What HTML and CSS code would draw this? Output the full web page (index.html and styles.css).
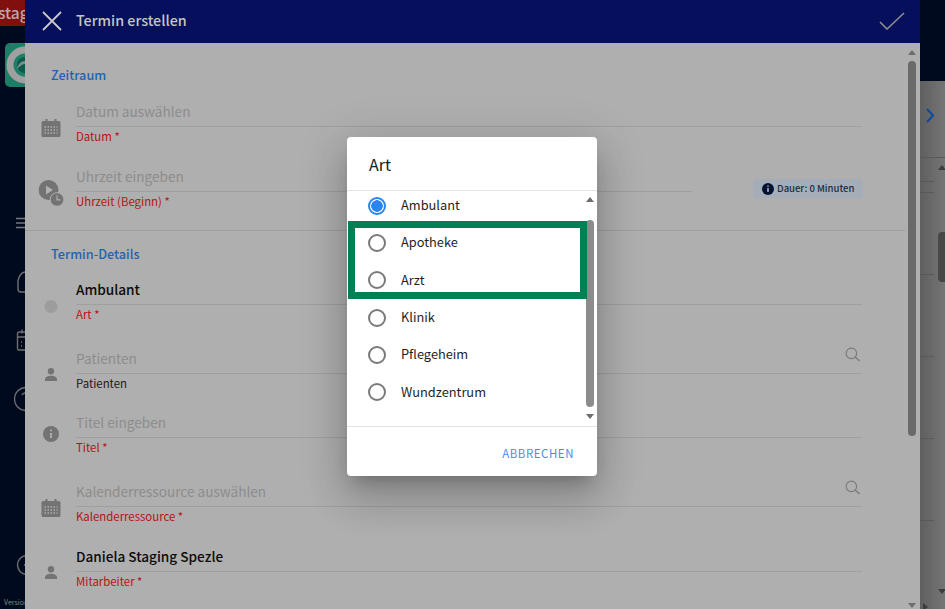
FILE: index.html
```html
<!DOCTYPE html>
<html lang="de">
<head>
    <meta charset="UTF-8">
    <meta name="viewport" content="width=device-width, initial-scale=1.0">
    <title>Termin erstellen</title>
    <link rel="stylesheet" href="styles.css">
</head>
<body>
    <div class="page">
        <aside class="sidebar">
            <div class="stage-tag">stag</div>
            <div class="logo">
                <svg width="20" height="44" viewBox="0 0 20 44"><circle cx="20" cy="22" r="15" fill="none" stroke="#a0a0a0" stroke-width="7"/><circle cx="20" cy="22" r="8" fill="#0d5a4c"/><path d="M12 26c1-5 4-8 8-8v3c-3 0-5 2-8 5z" fill="#7d8f89"/></svg>
            </div>
            <svg class="side-icon menu-icon" width="12" height="12" viewBox="0 0 12 12"><path d="M1 1.500h11M1 6h11M1 10.500h11" stroke="#777" stroke-width="1.400"/></svg>
            <svg class="side-icon bell-icon" width="10" height="24" viewBox="0 0 10 24"><path d="M10 2C5 2 3 6 2 11v8c0 2 1 3 3 3h5" fill="none" stroke="#707070" stroke-width="1.400"/></svg>
            <svg class="side-icon cal-icon" width="10" height="24" viewBox="0 0 10 24"><path d="M10 4H3a1.500 1.500 0 0 0-1.500 1.500v15A1.500 1.500 0 0 0 3 22h7M1.500 9H10M6 1.500v4M5 14h1M5 18h1" fill="none" stroke="#707070" stroke-width="1.400"/></svg>
            <svg class="side-icon help-icon" width="12" height="26" viewBox="0 0 12 26"><path d="M12 1.500a11.500 11.500 0 0 0 0 23" fill="none" stroke="#707070" stroke-width="1.400"/><path d="M8 9c1-2 3-2 4-2" fill="none" stroke="#707070" stroke-width="1.400"/></svg>
            <svg class="side-icon back-icon" width="12" height="26" viewBox="0 0 12 26"><path d="M12 3.500a9.500 9.500 0 0 0 0 19M12 13H9" fill="none" stroke="#707070" stroke-width="1.400"/></svg>
            <div class="version">Version</div>
        </aside>

        <main class="panel">
            <header class="panel-header">
                <svg class="close-icon" width="20" height="20" viewBox="0 0 20 20"><path d="M1 1l18 18M19 1L1 19" stroke="#c9c9c9" stroke-width="1.800"/></svg>
                <h1>Termin erstellen</h1>
                <svg class="check-icon" width="26" height="18" viewBox="0 0 26 18"><path d="M1 10l7 7L25 1" fill="none" stroke="#8e8e8e" stroke-width="1.600"/></svg>
            </header>

            <div class="panel-body">
                <div class="form">
                    <section class="form-section first">
                        <h2>Zeitraum</h2>
                        <div class="field-row">
                            <svg class="row-icon icon-cal" width="20" height="18" viewBox="0 0 20 18"><path fill="#737373" d="M2 2h2.500V0h2v2h7V0h2v2H18a1.500 1.500 0 0 1 1.500 1.500v13A1.500 1.500 0 0 1 18 18H2a1.500 1.500 0 0 1-1.500-1.500v-13A1.500 1.500 0 0 1 2 2z"/><path stroke="#b0b0b0" stroke-width="1.500" stroke-dasharray="1.500 1.500" d="M3.500 8h13M3.500 11h13M3.500 14h13"/></svg>
                            <div class="field">
                                <div class="field-value placeholder">Datum auswählen</div>
                                <div class="field-label required">Datum *</div>
                            </div>
                        </div>
                        <div class="field-row">
                            <svg class="row-icon icon-time" width="25" height="27" viewBox="0 0 25 27"><circle cx="10" cy="10" r="10" fill="#737373"/><path d="M7.500 5.500l7 4.500-7 4.500z" fill="#b0b0b0"/><circle cx="18.500" cy="19.500" r="6.800" fill="#737373" stroke="#b0b0b0" stroke-width="1"/><path d="M18.500 15.500v4.300h3.500" fill="none" stroke="#b0b0b0" stroke-width="1.200"/></svg>
                            <div class="field time-field">
                                <div class="field-value placeholder">Uhrzeit eingeben</div>
                                <div class="field-label required">Uhrzeit (Beginn) *</div>
                            </div>
                            <div class="field end-field">
                                <div class="field-value placeholder">&nbsp;</div>
                            </div>
                            <div class="duration">
                                <svg width="12" height="12" viewBox="0 0 12 12"><circle cx="6" cy="6" r="6" fill="#04122f"/><path d="M6 5v4M6 2.500v1.300" stroke="#b4bcc9" stroke-width="1.500"/></svg>
                                Dauer: 0 Minuten
                            </div>
                        </div>
                    </section>

                    <section class="form-section details">
                        <h2>Termin-Details</h2>
                        <div class="field-row">
                            <span class="row-icon dot"></span>
                            <div class="field">
                                <div class="field-value filled">Ambulant</div>
                                <div class="field-label required">Art *</div>
                            </div>
                        </div>
                        <div class="field-row">
                            <svg class="row-icon icon-person" width="12" height="13" viewBox="0 0 12 13"><circle cx="6" cy="3.200" r="3.200" fill="#737373"/><path d="M0 13v-1.500C0 9 3 7.800 6 7.800s6 1.200 6 3.700V13z" fill="#737373"/></svg>
                            <div class="field">
                                <div class="field-value placeholder">Patienten</div>
                                <div class="field-label">Patienten</div>
                                <svg class="search-icon" width="15" height="15" viewBox="0 0 16 16"><circle cx="6.800" cy="6.800" r="5.600" fill="none" stroke="#7a7a7a" stroke-width="1.200"/><path d="M11 11l4.500 3.800" stroke="#7a7a7a" stroke-width="1.400"/></svg>
                            </div>
                        </div>
                        <div class="field-row">
                            <svg class="row-icon icon-info" width="16" height="16" viewBox="0 0 16 16"><circle cx="8" cy="8" r="8" fill="#737373"/><path d="M8 7v5M8 3.500v1.800" stroke="#b0b0b0" stroke-width="1.800"/></svg>
                            <div class="field">
                                <div class="field-value placeholder">Titel eingeben</div>
                                <div class="field-label required">Titel *</div>
                            </div>
                        </div>
                        <div class="field-row">
                            <svg class="row-icon icon-cal" width="20" height="18" viewBox="0 0 20 18"><path fill="#737373" d="M2 2h2.500V0h2v2h7V0h2v2H18a1.500 1.500 0 0 1 1.500 1.500v13A1.500 1.500 0 0 1 18 18H2a1.500 1.500 0 0 1-1.500-1.500v-13A1.500 1.500 0 0 1 2 2z"/><path stroke="#b0b0b0" stroke-width="1.500" stroke-dasharray="1.500 1.500" d="M3.500 8h13M3.500 11h13M3.500 14h13"/></svg>
                            <div class="field">
                                <div class="field-value placeholder">Kalenderressource auswählen</div>
                                <div class="field-label required">Kalenderressource *</div>
                                <svg class="search-icon" width="15" height="15" viewBox="0 0 16 16"><circle cx="6.800" cy="6.800" r="5.600" fill="none" stroke="#7a7a7a" stroke-width="1.200"/><path d="M11 11l4.500 3.800" stroke="#7a7a7a" stroke-width="1.400"/></svg>
                            </div>
                        </div>
                        <div class="field-row">
                            <svg class="row-icon icon-person" width="12" height="13" viewBox="0 0 12 13"><circle cx="6" cy="3.200" r="3.200" fill="#737373"/><path d="M0 13v-1.500C0 9 3 7.800 6 7.800s6 1.200 6 3.700V13z" fill="#737373"/></svg>
                            <div class="field">
                                <div class="field-value filled">Daniela Staging Spezle</div>
                                <div class="field-label required">Mitarbeiter *</div>
                            </div>
                        </div>
                    </section>
                </div>

                <div class="scrollbar panel-scroll">
                    <span class="arrow up"></span>
                    <span class="thumb"></span>
                    <span class="arrow down"></span>
                </div>
            </div>
        </main>

        <aside class="behind">
            <div class="behind-top"></div>
            <svg class="chevron" width="9" height="15" viewBox="0 0 9 15"><path d="M1 1l6 6.500L1 14" fill="none" stroke="#0a4a9c" stroke-width="2"/></svg>
            <div class="behind-table">
                <div class="behind-line"></div>
                <div class="behind-line"></div>
                <div class="behind-line"></div>
                <div class="behind-line"></div>
                <div class="behind-line"></div>
                <div class="behind-line"></div>
                <span class="behind-arrow up"></span>
                <span class="behind-thumb"></span>
                <span class="behind-arrow down"></span>
                <span class="behind-arrow right"></span>
            </div>
        </aside>
    </div>

    <div class="dialog">
        <h3>Art</h3>
        <div class="dialog-list">
            <label class="option selected"><span class="radio"></span>Ambulant</label>
            <label class="option"><span class="radio"></span>Apotheke</label>
            <label class="option"><span class="radio"></span>Arzt</label>
            <label class="option"><span class="radio"></span>Klinik</label>
            <label class="option"><span class="radio"></span>Pflegeheim</label>
            <label class="option"><span class="radio"></span>Wundzentrum</label>
            <div class="scrollbar list-scroll">
                <span class="arrow up"></span>
                <span class="thumb"></span>
                <span class="arrow down"></span>
            </div>
        </div>
        <div class="dialog-actions">
            <button class="cancel-button">ABBRECHEN</button>
        </div>
        <div class="highlight"></div>
    </div>
</body>
</html>
```

FILE: styles.css
```css
* {
    margin: 0;
    padding: 0;
    box-sizing: border-box;
    font-family: 'Noto Sans CJK SC', 'Open Sans', sans-serif;
}

html, body {
    height: 100%;
    overflow: hidden;
}

body {
    background-color: #000a1e;
}

.page {
    display: flex;
    height: 609px;
    overflow: hidden;
}

/* Left nav, mostly hidden by the panel */
.sidebar {
    width: 25px;
    flex-shrink: 0;
    display: flex;
    flex-direction: column;
    background-color: #000a1e;
    overflow: hidden;
}

.stage-tag {
    height: 26px;
    text-indent: -2px;
    background-color: #800f0e;
    color: #b9aaaa;
    font-size: 15.500px;
    line-height: 24px;
    font-weight: 500;
    white-space: nowrap;
}

.logo {
    width: 20px;
    height: 44px;
    margin: 17px 0 0 5px;
    background-color: #1c7f68;
    border-radius: 5px 0 0 5px;
}

.side-icon {
    display: block;
    flex-shrink: 0;
}

.menu-icon { margin: 130px 0 0 15px; }
.bell-icon { margin: 41px 0 0 16px; }
.cal-icon { margin: 34px 0 0 16px; }
.help-icon { margin: 34px 0 0 14px; }
.back-icon { margin: 140px 0 0 15px; }

.version {
    margin-top: 20px;
    padding-left: 4px;
    font-size: 7px;
    line-height: 9px;
    color: #858585;
    white-space: nowrap;
}

/* Form panel */
.panel {
    width: 895px;
    flex-shrink: 0;
    display: flex;
    flex-direction: column;
    background-color: #afafaf;
}

.panel-header {
    height: 43px;
    flex-shrink: 0;
    display: flex;
    align-items: center;
    padding: 0 15px 2px 17px;
    background-color: #050f5c;
}

.close-icon {
    margin-right: 14px;
}

.panel-header h1 {
    flex: 1;
    margin-bottom: 2px;
    font-size: 14.300px;
    line-height: 22px;
    font-weight: 500;
    color: #c4c4c4;
}

.panel-body {
    flex: 1;
    display: flex;
    overflow: hidden;
}

.form {
    width: 880px;
    flex-shrink: 0;
}

.form-section {
    padding-left: 51px;
}

.form-section.first {
    height: 188px;
    padding-top: 22px;
    border-bottom: 1px solid #9f9f9f;
}

.form-section.details {
    padding-top: 13px;
}

.form-section h2 {
    margin-left: -25px;
    font-size: 12.700px;
    line-height: 19px;
    font-weight: 500;
    color: #1f63b4;
}

.field-row {
    position: relative;
    display: flex;
    align-items: flex-start;
    height: 47px;
}

/* rows are not evenly spaced in the form */
.first .field-row:nth-of-type(1) { margin-top: 17px; }
.first .field-row:nth-of-type(2) { margin-top: 18px; }
.details .field-row:nth-of-type(1) { margin-top: 16px; }
.details .field-row:nth-of-type(2) { margin-top: 22px; }
.details .field-row:nth-of-type(3) { margin-top: 17px; }
.details .field-row:nth-of-type(4) { margin-top: 22px; }
.details .field-row:nth-of-type(5) { margin-top: 18px; }

.row-icon {
    position: absolute;
    left: -25px;
    transform: translateX(-50%);
}

.icon-cal { top: 18px; }
.icon-time { top: 14px; }
.icon-person { top: 20px; }
.icon-info { top: 14px; }

.dot {
    top: 21px;
    width: 13px;
    height: 13px;
    border-radius: 50%;
    background-color: #9d9d9d;
}

.field {
    position: relative;
    width: 786px;
}

.field-value {
    height: 26px;
    font-size: 13.600px;
    line-height: 20px;
    border-bottom: 1px solid #9f9f9f;
    white-space: nowrap;
}

.placeholder {
    color: #8c8c8c;
}

.filled {
    color: #0b0b0b;
    font-weight: 500;
}

.field-label {
    margin-top: 1px;
    font-size: 11.400px;
    line-height: 17px;
    color: #1a1a1a;
}

.required {
    color: #b51414;
}

.time-field {
    width: 258px;
}

.end-field {
    width: 358px;
}

.duration {
    position: absolute;
    left: 677px;
    top: 13px;
    display: flex;
    align-items: center;
    gap: 3px;
    width: 110px;
    height: 19px;
    padding-left: 9px;
    background-color: #a5adb8;
    border-radius: 4px;
    color: #1c2b44;
    font-size: 9.500px;
    line-height: 19px;
    font-weight: 500;
    white-space: nowrap;
}

.duration svg {
    flex-shrink: 0;
}

.search-icon {
    position: absolute;
    right: 2px;
    top: -1px;
}

/* Scrollbars */
.scrollbar {
    position: relative;
    flex-shrink: 0;
}

.scrollbar .arrow,
.behind-arrow {
    position: absolute;
    width: 0;
    height: 0;
    border-left: 4px solid transparent;
    border-right: 4px solid transparent;
}

.scrollbar .arrow {
    left: 50%;
    margin-left: -4px;
}

.scrollbar .arrow.up {
    border-bottom: 5px solid #6e6e6e;
}

.scrollbar .arrow.down {
    border-top: 5px solid #6e6e6e;
}

.thumb {
    position: absolute;
    left: 0;
    right: 0;
    background-color: #6a6a6a;
    border-radius: 4px;
}

.panel-scroll {
    width: 8px;
    margin-left: 3px;
    height: 100%;
}

.panel-scroll .arrow.up { top: 7px; }
.panel-scroll .arrow.down { top: 560px; }
.panel-scroll .thumb { top: 18px; height: 375px; }

/* Page behind the panel */
.behind {
    flex: 1;
    background: linear-gradient(90deg, #5f5f5f, #757575);
    overflow: hidden;
}

.behind-top {
    height: 81px;
    background-color: #000a1e;
}

.chevron {
    display: block;
    margin: 27px 0 0 6px;
}

.behind-table {
    position: relative;
    height: 452px;
    margin-top: 34px;
    padding-top: 23px;
    border-top: 1px solid #5a5a5a;
}

.behind-line {
    width: 14px;
    height: 1px;
    background-color: #585858;
    margin-top: 81px;
}

.behind-line:nth-child(1) { margin-top: 0; }
.behind-line:nth-child(2) { margin-top: 10px; }

.behind-arrow.up {
    right: -1px;
    top: 7px;
    border-bottom: 5px solid #3c3c3c;
}

.behind-arrow.down {
    right: -1px;
    top: 431px;
    border-top: 5px solid #3c3c3c;
}

.behind-arrow.right {
    left: 3px;
    top: 445px;
    border: none;
    border-top: 4px solid transparent;
    border-bottom: 4px solid transparent;
    border-left: 5px solid #3c3c3c;
}

.behind-thumb {
    position: absolute;
    right: 0;
    top: 74px;
    width: 7px;
    height: 50px;
    background-color: #474747;
    border-radius: 4px 0 0 4px;
}

/* Dialog */
.dialog {
    position: absolute;
    left: 347px;
    top: 137px;
    width: 250px;
    height: 339px;
    display: flex;
    flex-direction: column;
    background-color: white;
    border-radius: 4px;
    box-shadow: 0 11px 15px -7px rgba(0,0,0,0.2), 0 24px 38px 3px rgba(0,0,0,0.14), 0 9px 46px 8px rgba(0,0,0,0.12);
}

.dialog h3 {
    height: 54px;
    padding: 14px 0 0 22px;
    font-size: 16px;
    line-height: 26px;
    font-weight: 400;
    color: #1a1a1a;
    border-bottom: 1px solid #e3e3e3;
}

.dialog-list {
    position: relative;
    height: 236px;
    border-bottom: 1px solid #e3e3e3;
}

.option {
    display: flex;
    align-items: center;
    height: 37.300px;
    padding: 0 0 2px 21px;
    font-size: 12.800px;
    color: #1f1f1f;
}

/* list is scrolled a little, first row sits under the title */
.option:first-child {
    margin-top: -4px;
}

.radio {
    width: 18px;
    height: 18px;
    margin: 2px 15px 0 0;
    border: 2px solid #7a7a7a;
    border-radius: 50%;
}

.option.selected .radio {
    border-color: #2a85f0;
    background: radial-gradient(circle, #2a85f0 0 5.500px, white 6px);
}

.list-scroll {
    position: absolute;
    top: 0;
    right: 3px;
    width: 8px;
    height: 100%;
}

.list-scroll .arrow.up { top: 6px; }
.list-scroll .arrow.down { top: 223px; }
.list-scroll .thumb { top: 29px; height: 187px; background-color: #8c8c8c; }

.dialog-actions {
    flex: 1;
    display: flex;
    align-items: center;
    justify-content: flex-end;
    padding: 3px 23px 0 0;
}

.cancel-button {
    background: none;
    border: none;
    color: #3f8ff0;
    font-size: 11.400px;
    letter-spacing: 0.6px;
    font-weight: 400;
}

.highlight {
    position: absolute;
    left: 1px;
    top: 84px;
    width: 239px;
    height: 78px;
    border: 7px solid #008055;
    pointer-events: none;
}
```
